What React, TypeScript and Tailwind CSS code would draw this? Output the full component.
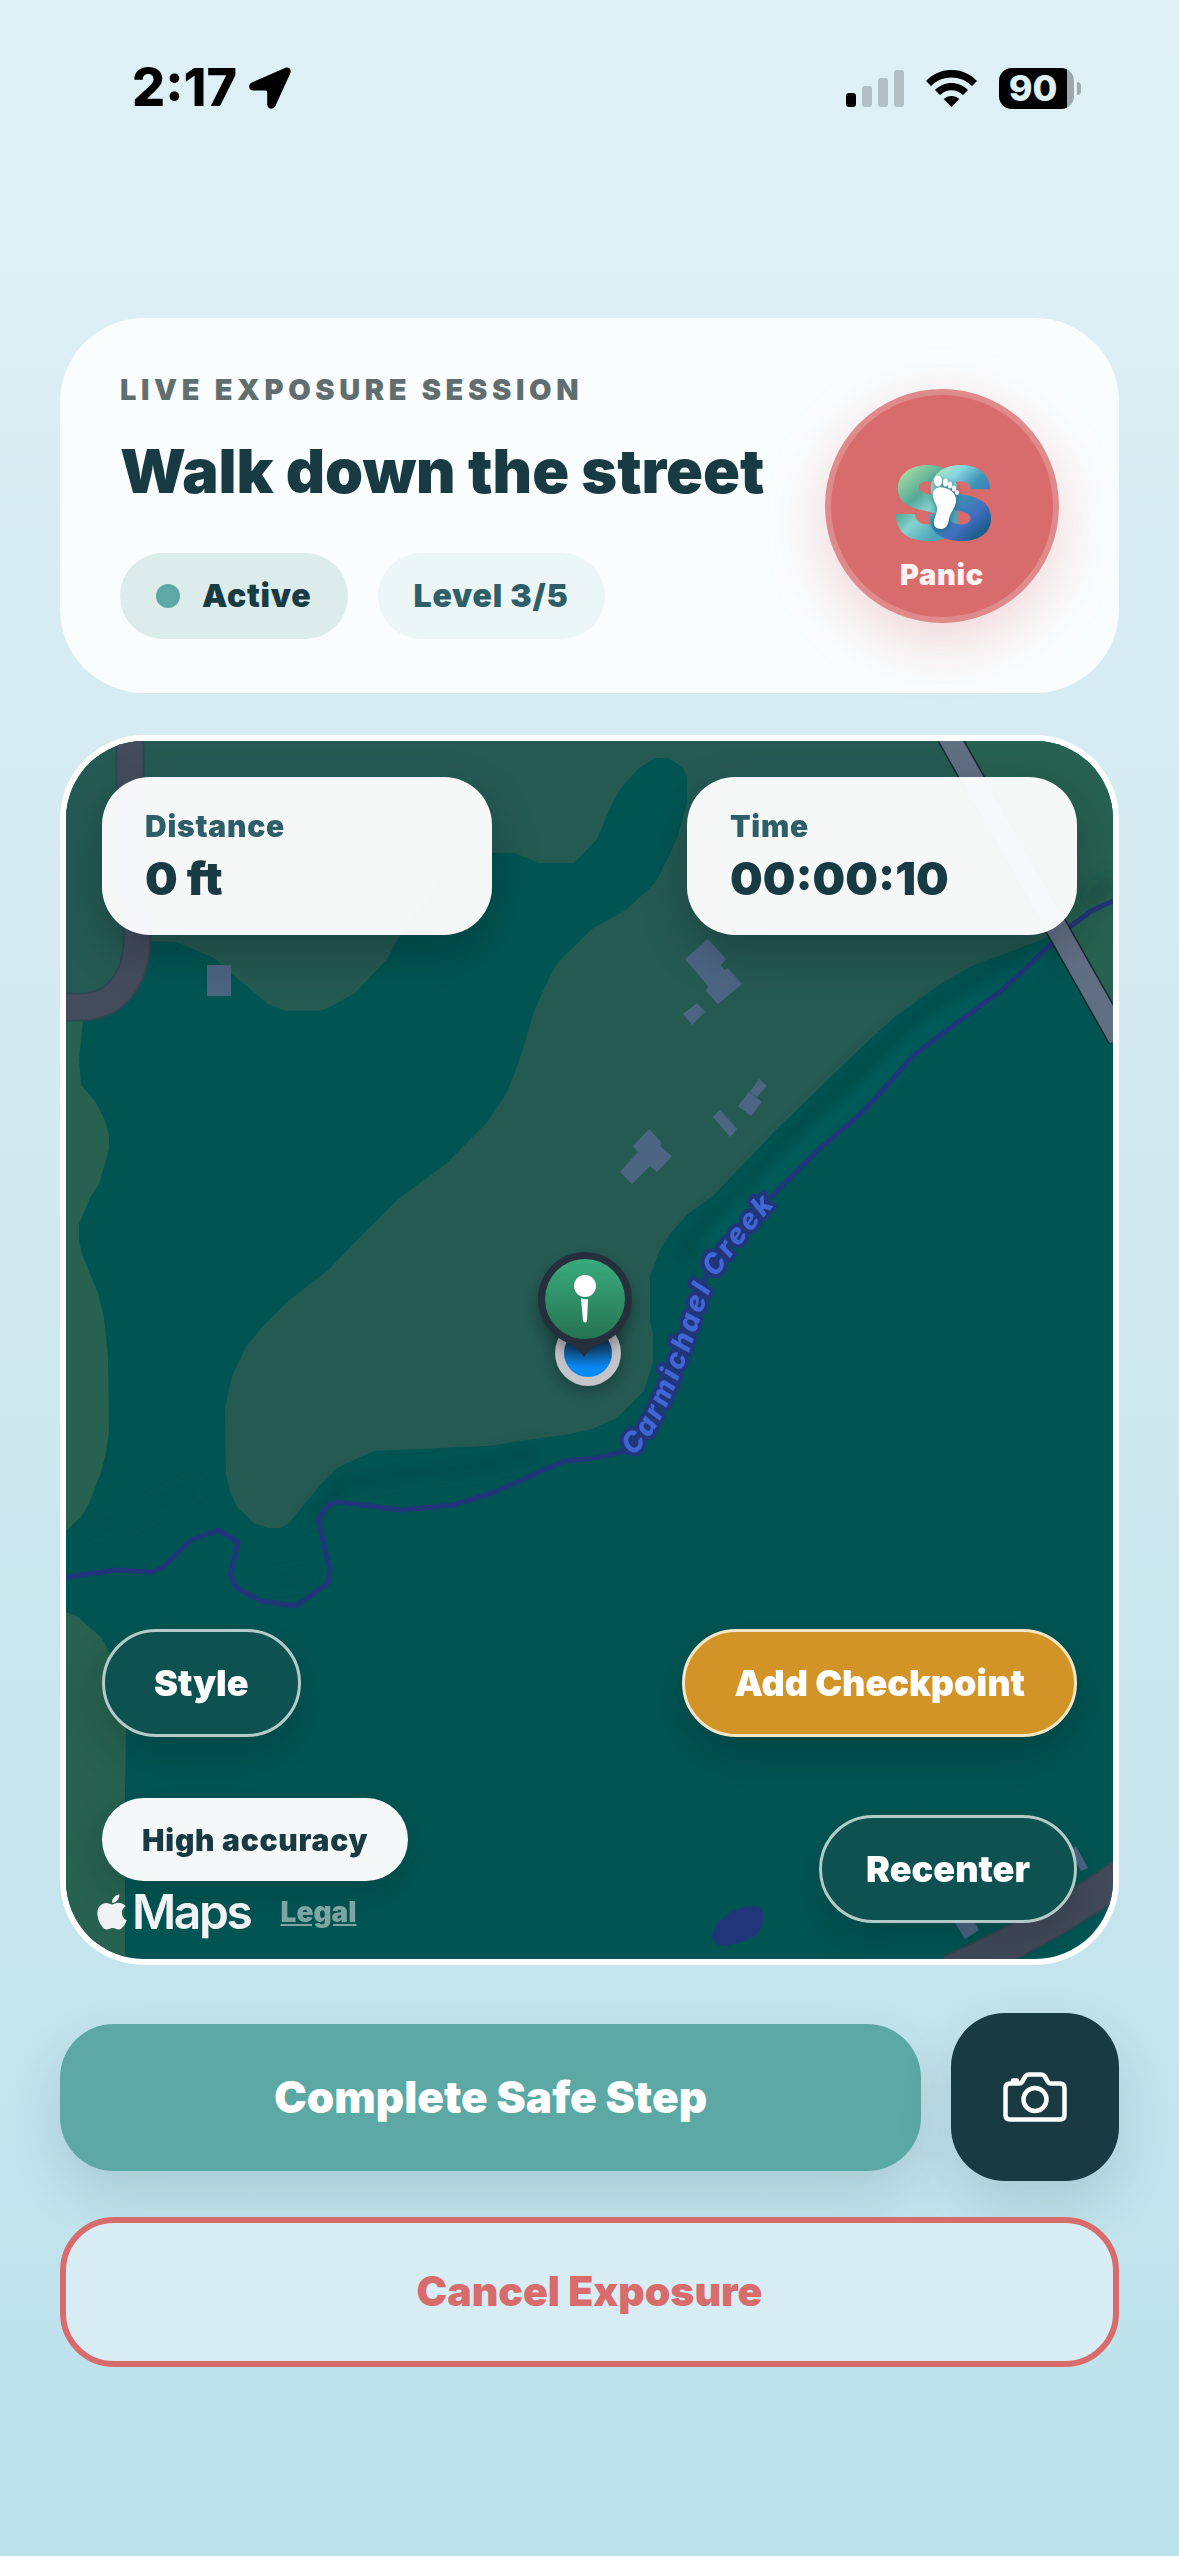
import { FaApple } from "react-icons/fa"

const stats = [
  { label: "Distance", value: "0 ft" },
  { label: "Time", value: "00:00:10" },
]

function StatusBar() {
  return (
    <header className="flex h-44 items-center justify-between pl-[132px] pr-[98px] text-black">
      <div className="flex items-center gap-3">
        <span className="text-[52px] leading-none font-extrabold">2:17</span>
        <svg viewBox="0 0 42 42" className="size-[42px]" fill="currentColor">
          <path d="M36 1 3 15.500C-1.500 17.700-.500 23.500 4.500 23.600H16.500Q18.200 23.600 18.200 25.400V37.500C18.400 42.600 24.500 43 26.500 38.700L41.200 6.500C43 2.500 40-.700 36 1Z" />
        </svg>
      </div>
      <div className="flex items-center gap-[22px]">
        <svg viewBox="0 0 58 37" className="h-[37px] w-[58px]">
          <rect x="0" y="23" width="10" height="14" rx="3" fill="#000" />
          <rect x="16" y="16" width="10" height="21" rx="3" fill="#b1c0c5" />
          <rect x="32" y="8" width="10" height="29" rx="3" fill="#b1c0c5" />
          <rect x="48" y="0" width="10" height="37" rx="3" fill="#b1c0c5" />
        </svg>
        <svg viewBox="0 0 51 37" className="h-[37px] w-[51px]">
          <path d="M0 11C14-3.700 37-3.700 51 11L46 16C34.500 4.800 16.500 4.800 5 16Z" />
          <path d="M9 20C18.500 10.700 32.500 10.700 42 20L37 25C30.500 18.600 20.500 18.600 14 25Z" />
          <path d="M17.700 29C22 25 29 25 33.300 29L25.500 37Z" />
        </svg>
        <div className="flex items-center gap-[3px]">
          <div className="flex h-[41px] w-[75px] overflow-hidden rounded-[13px] bg-[#9ca9ad]">
            <div className="flex w-[68px] items-center justify-center bg-black text-[36px] leading-none font-extrabold text-[#dff0f5]">
              90
            </div>
          </div>
          <div className="h-[13px] w-1 rounded-r-full bg-[#9ca9ad]" />
        </div>
      </div>
    </header>
  )
}

function Logo() {
  return (
    <svg viewBox="-8 -24 108 124" className="h-[124px] w-[108px]">
      <defs>
        <linearGradient id="logoLeft" x1="0" y1="0" x2="0.5" y2="1">
          <stop offset="0.25" stopColor="#a5dba0" />
          <stop offset="0.5" stopColor="#55a99a" />
          <stop offset="0.65" stopColor="#86d3cd" />
          <stop offset="0.85" stopColor="#4ea6bd" />
        </linearGradient>
        <linearGradient id="logoRight" x1="0.1" y1="0" x2="0.6" y2="1">
          <stop offset="0.2" stopColor="#b5e6bd" />
          <stop offset="0.35" stopColor="#86d6e0" />
          <stop offset="0.52" stopColor="#3f93b5" />
          <stop offset="0.72" stopColor="#416fc0" />
          <stop offset="0.88" stopColor="#1c5d8c" />
        </linearGradient>
      </defs>
      <g className="font-[Inter,sans-serif] text-[102px] font-black">
        <text x="-3" y="75" fill="url(#logoLeft)">S</text>
        <text x="30" y="75" fill="url(#logoRight)">S</text>
      </g>
      {/* Footprint */}
      <g fill="#fff" className="drop-shadow-[0_2px_3px_rgba(10,60,90,0.6)]">
        <ellipse cx="42" cy="16" rx="4" ry="5.500" />
        <ellipse cx="49.500" cy="17.500" rx="2.500" ry="4" />
        <ellipse cx="54" cy="20" rx="2.200" ry="3.500" />
        <ellipse cx="58" cy="23.500" rx="2" ry="3" />
        <ellipse cx="61" cy="27.500" rx="2" ry="2.600" />
        <path d="M37 30C37 23 43 21 49 23C56 25 61 30 60 37C59 44 54 47 53 54C52 61 49 64 45 64C40 64 37 61 38 56C39 50 42 47 41 42C40 38 37 35 37 30Z" />
      </g>
    </svg>
  )
}

function SessionCard() {
  return (
    <section className="flex items-center justify-between rounded-[84px] bg-[#fafdfe] px-[60px] py-[54px]">
      <div className="flex flex-col items-start">
        <p className="text-[29px] leading-9 font-black tracking-[0.16em] text-[#616e70] uppercase">
          Live exposure session
        </p>
        <h1 className="mt-6 text-[61px] leading-[78px] font-black whitespace-nowrap text-[#183a42]">
          Walk down the street
        </h1>
        <div className="mt-[43px] flex gap-[30px] text-[32px] leading-none font-black tracking-wide">
          <span className="flex h-[86px] items-center gap-[22px] rounded-full bg-[#dbecea] px-9 text-[#183a42]">
            <span className="size-6 rounded-full bg-[#5ba8a4]" />
            Active
          </span>
          <span className="flex h-[86px] items-center rounded-full bg-[#edf6f7] px-9 text-[#2e5f69]">Level 3/5</span>
        </div>
      </div>
      <button
        type="button"
        className="flex size-[234px] shrink-0 flex-col items-center justify-end rounded-full border-[6px] border-[#e08b8b] bg-[#d86c6c] pb-6 shadow-[0_18px_60px_rgba(216,108,108,0.28)]"
      >
        <Logo />
        <span className="-mt-2 text-[29px] leading-9 font-black tracking-wide text-[#fff2f2]">Panic</span>
      </button>
    </section>
  )
}

function MapCanvas() {
  return (
    <svg viewBox="66 741 1047 1218" preserveAspectRatio="xMidYMid slice" className="absolute inset-0 size-full">
      <defs>
        <filter id="soft" x="-20%" y="-20%" width="140%" height="140%">
          <feGaussianBlur stdDeviation="7" />
        </filter>
        <filter id="pinShadow" x="-50%" y="-50%" width="200%" height="200%">
          <feGaussianBlur stdDeviation="8" />
        </filter>
        <linearGradient id="pinFill" x1="0" y1="0" x2="0" y2="1">
          <stop offset="0" stopColor="#3aab7e" />
          <stop offset="1" stopColor="#257350" />
        </linearGradient>
        <linearGradient id="dotFill" x1="0" y1="0" x2="0" y2="1">
          <stop offset="0.3" stopColor="#15426e" />
          <stop offset="0.8" stopColor="#088af5" />
        </linearGradient>
        <path id="creekLabel" d="M633 1456C660 1432 673 1392 689 1352C701 1320 704 1300 718 1276C734 1250 754 1228 784 1194" />
      </defs>

      {/* Woodland and clearings */}
      <rect x="66" y="741" width="1047" height="1218" fill="#005553" />
      <path
        fill="#255a53"
        d="M66 741H951L1060 933L972 966L939 985L895 1017L866 1043L775 1131L715 1194L687 1215L670 1234L660 1250L650 1276V1322L653 1334V1362L644 1391L617 1418L590 1430L564 1435L528 1440L488 1446L374 1451L337 1468L321 1484L289 1523L280 1528H268L254 1523L238 1508L231 1494L226 1475L225 1408L232 1376L246 1347L262 1327L287 1302L327 1271L397 1200L447 1163L487 1122L500 1103L508 1090L518 1064L526 1039L534 1011L551 974L560 960L592 929L627 909L655 883L670 854L678 835L687 803V777L683 768L669 758H655L639 768L620 789L610 808L597 839L574 863H539L514 853H492L440 880L400 935L387 959L355 993L330 1007L319 1011H286L268 1004L231 973L214 958L176 942L137 941C137 978 117 1007 80 1007H66Z"
      />
      <path
        fill="#27614f"
        d="M66 1010H84L79 1060L81 1085L95 1101L104 1118L109 1135V1149L99 1184L90 1198L79 1224V1241L83 1257L98 1293L104 1318L108 1356L109 1432L105 1457L101 1472L89 1504L81 1517L66 1531Z"
      />
      <path fill="#27614f" d="M66 1612L78 1617L102 1638L110 1654L124 1690L126 1728L125 1795V1959H66Z" />
      <path fill="#27614f" d="M951 741H1113V1027Z" />

      {/* Terrain shading along the creek */}
      <g fill="none" filter="url(#soft)" strokeWidth="16" strokeLinejoin="round">
        <path stroke="#004845" opacity="0.55" d="M1030 958L978 985L912 1022L862 1068L785 1143L740 1196L702 1228L678 1262" />
        <path stroke="#006563" opacity="0.5" d="M1042 955L995 985L925 1032L868 1090L800 1150L748 1202L708 1245" />
        <path stroke="#004845" opacity="0.45" d="M540 1450L480 1466L400 1474L345 1484L310 1520" />
        <path stroke="#004845" opacity="0.3" d="M90 1528L130 1520L170 1498L200 1484M270 1582L310 1576" />
        <path stroke="#1c5048" opacity="0.7" d="M1113 880L1088 902" />
      </g>

      {/* Creek and pond */}
      <path
        fill="none"
        stroke="#21367a"
        strokeWidth="5"
        strokeLinejoin="round"
        d="M1113 901L1091 911L1071 926L1053 942L1026 968L1001 991L954 1025L914 1055L873 1101L855 1119L818 1150L785 1183L766 1202L746 1222L726 1244L708 1272L694 1302L676 1346L660 1400L649 1432L626 1451L595 1458L564 1461L492 1493L453 1505L400 1510L339 1502L329 1504L318 1520L330 1570L328 1583L296 1606L261 1601L238 1589L230 1576L238 1542L218 1530L191 1540L162 1568L151 1572L116 1570L66 1577"
      />
      <path fill="#21367a" d="M713 1933C718 1918 732 1908 752 1906C758 1906 763 1908 763 1914C764 1927 759 1935 748 1939C736 1944 726 1947 718 1945C714 1944 711 1938 713 1933Z" />

      {/* Roads */}
      <g fill="none">
        <path stroke="#2c4852" strokeWidth="29" d="M130 735V860Q137 905 137 938C137 978 117 1007 80 1007H60" />
        <path stroke="#444c5c" strokeWidth="25" d="M130 735V860Q137 905 137 938C137 978 117 1007 80 1007H60" />
        <path stroke="#17272c" strokeWidth="24" d="M946 732L1119 1038" />
        <path stroke="#616f83" strokeWidth="21" d="M946 732L1119 1038" />
        <path stroke="#2c4852" strokeWidth="36" d="M950 1972Q1050 1928 1125 1873" />
        <path stroke="#424a5b" strokeWidth="32" d="M950 1972Q1050 1928 1125 1873" />
      </g>

      {/* Buildings */}
      <g fill="#4c6583">
        <path d="M207 965H231V996H207Z" />
        <path d="M708 939L726 959L721 965L724 970L728 968L742 984L718 1004L706 991L708 986L685 959Z" />
        <path d="M697 1003L705 1012L692 1025L683 1014Z" />
        <path d="M759 1079L767 1086L757 1097L750 1092Z" />
        <path d="M749 1092L762 1102L751 1116L738 1106Z" />
        <path d="M720 1110L737 1129L730 1137L713 1117Z" />
        <path d="M649 1129L662 1143L660 1146L672 1156L657 1172L650 1166L632 1184L620 1172L638 1152L633 1146Z" />
        <path d="M1076 1846L1088 1868L1081 1871L1070 1851Z" />
        <path d="M950 1915L968 1910L979 1930L965 1939Z" />
      </g>

      <text
        className="font-[Inter,sans-serif] text-[28px] font-extrabold tracking-widest italic"
        fill="#4065d4"
        stroke="#21367a"
        strokeWidth="8"
        strokeLinejoin="round"
        paintOrder="stroke"
      >
        <textPath href="#creekLabel">Carmichael Creek</textPath>
      </text>

      {/* Current location and start pin */}
      <circle cx="588" cy="1356" r="36" fill="#000" opacity="0.25" filter="url(#pinShadow)" />
      <circle cx="588" cy="1353" r="33" fill="#c4c4cb" />
      <circle cx="588" cy="1353" r="24" fill="url(#dotFill)" />
      <circle cx="585" cy="1308" r="46" fill="#000" opacity="0.35" filter="url(#pinShadow)" />
      <path fill="#25303c" d="M562 1340C576 1345 580 1352 584 1357C588 1352 592 1345 606 1340Z" />
      <circle cx="585" cy="1299" r="47" fill="#25303c" />
      <circle cx="585" cy="1299" r="40" fill="url(#pinFill)" />
      <circle cx="585" cy="1286" r="11" fill="#fff" />
      <path fill="#fff" d="M581 1298Q585 1300 588 1299L587 1321Q585 1324 583 1321Z" />
    </svg>
  )
}

function MapCard() {
  return (
    <section className="relative mt-[42px] flex min-h-[900px] flex-1 flex-col overflow-hidden rounded-[84px] border-[6px] border-white">
      <MapCanvas />

      <div className="relative flex flex-1 flex-col justify-between p-9">
        <dl className="flex justify-between">
          {stats.map((stat) => (
            <div
              key={stat.label}
              className="flex h-[158px] w-[390px] flex-col justify-center rounded-[48px] bg-[#fafbfb]/98 px-[43px] shadow-[0_18px_48px_rgba(0,0,0,0.24)]"
            >
              <dt className="text-[30px] leading-9 font-black tracking-wide text-[#2e5f69]">{stat.label}</dt>
              <dd className="mt-2 text-[46px] leading-[52px] font-black text-[#183a42]">{stat.value}</dd>
            </div>
          ))}
        </dl>

        <div>
          <div className="flex justify-between text-[36px] leading-none font-black text-white">
            <button
              type="button"
              className="h-[108px] rounded-full border-[3px] border-[#b4c9c9] bg-[#0d5150] px-[49px] shadow-[0_18px_48px_rgba(0,0,0,0.16)]"
            >
              Style
            </button>
            <button
              type="button"
              className="h-[108px] rounded-full border-[3px] border-[#f6e6c8] bg-[#d29427] px-[49px] shadow-[0_18px_48px_rgba(0,0,0,0.2)]"
            >
              Add Checkpoint
            </button>
          </div>
          <div className="mt-[61px] flex items-start justify-between">
            <span className="flex h-[83px] items-center rounded-full bg-[#f5f8f9] px-10 text-[30px] leading-none font-black tracking-wide text-[#183a42] shadow-[0_12px_42px_rgba(0,0,0,0.16)]">
              High accuracy
            </span>
            <button
              type="button"
              className="mt-[17px] h-[108px] rounded-full border-[3px] border-[#b4c9c9] bg-[#0d5150] px-[44px] text-[36px] leading-none font-black text-white shadow-[0_18px_48px_rgba(0,0,0,0.16)]"
            >
              Recenter
            </button>
          </div>
        </div>
      </div>

      {/* Map attribution */}
      <div className="absolute bottom-5 left-[26px] flex items-center gap-[30px]">
        <div className="flex items-center text-[#f1f2f3]">
          <FaApple className="size-[40px]" />
          <span className="text-[48px] leading-[54px] font-semibold tracking-tighter">Maps</span>
        </div>
        <a href="#legal" className="text-[28px] leading-9 font-black text-[#7ea5a3] underline">
          Legal
        </a>
      </div>
    </section>
  )
}

function CameraIcon() {
  return (
    <svg viewBox="0 0 64 50" className="h-[50px] w-16" fill="none" stroke="currentColor" strokeWidth="4.500" strokeLinejoin="round">
      <path d="M7 11.500H16Q18 11.500 19 10L22.500 4Q23.500 2.500 25.500 2.500H38.500Q40.500 2.500 41.500 4L45 10Q46 11.500 48 11.500H57Q61.500 11.500 61.500 16V43Q61.500 47.500 57 47.500H7Q2.500 47.500 2.500 43V16Q2.500 11.500 7 11.500Z" />
      <circle cx="32" cy="27.500" r="11.500" />
      <path d="M10 8.500H14" strokeLinecap="round" />
    </svg>
  )
}

export default function App() {
  return (
    <div className="flex min-h-screen flex-col bg-linear-to-b from-[#dff1f6] via-[#cfe8ef] to-[#bce2ec] font-[Inter,sans-serif]">
      <StatusBar />

      <main className="flex flex-1 flex-col px-[60px] pt-[142px] pb-[189px]">
        <SessionCard />
        <MapCard />

        {/* Session actions */}
        <div className="mt-12 flex items-center gap-[30px]">
          <button
            type="button"
            className="h-[147px] flex-1 rounded-[54px] bg-[#5ba8a4] text-[44px] font-black text-white shadow-[0_24px_54px_rgba(24,58,66,0.14)]"
          >
            Complete Safe Step
          </button>
          <button
            type="button"
            aria-label="Take photo"
            className="flex size-[168px] items-center justify-center rounded-[54px] bg-[#183a42] text-white shadow-[0_24px_54px_rgba(24,58,66,0.14)]"
          >
            <CameraIcon />
          </button>
        </div>
        <button
          type="button"
          className="mt-9 h-[150px] rounded-[54px] border-[6px] border-[#d86c6c] bg-[#d8edf3] text-[41px] font-black text-[#d86c6c]"
        >
          Cancel Exposure
        </button>
      </main>
    </div>
  )
}
